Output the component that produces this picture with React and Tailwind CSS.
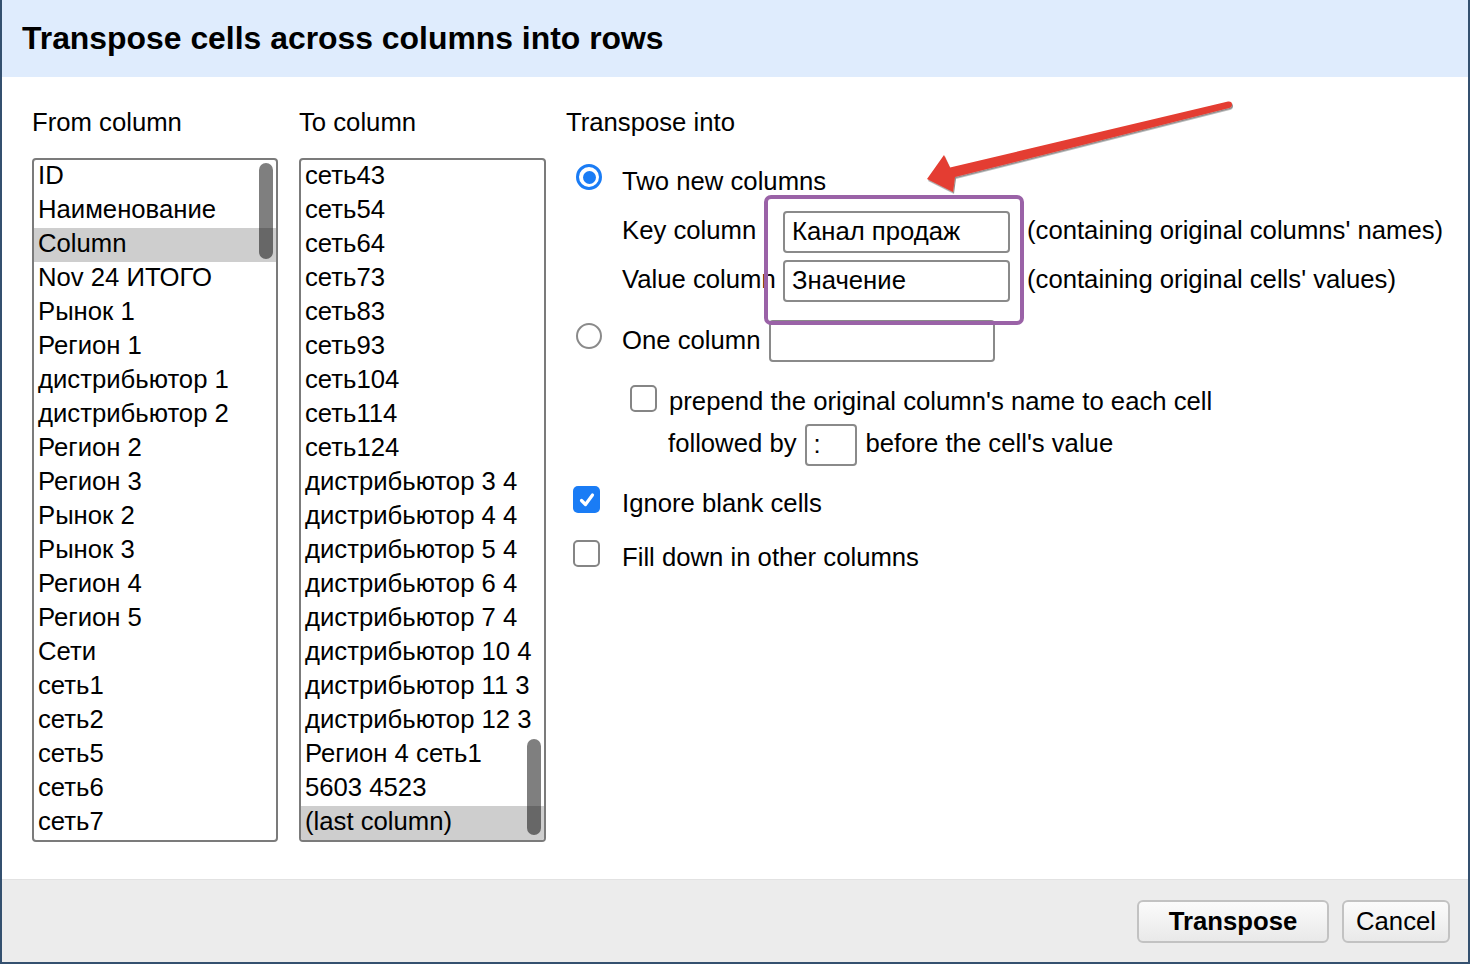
import React from "react";

const fromItems = [
  "ID", "Наименование", "Column", "Nov 24 ИТОГО", "Рынок 1", "Регион 1",
  "дистрибьютор 1", "дистрибьютор 2", "Регион 2", "Регион 3", "Рынок 2",
  "Рынок 3", "Регион 4", "Регион 5", "Сети", "сеть1", "сеть2", "сеть5",
  "сеть6", "сеть7",
];
const toItems = [
  "сеть43", "сеть54", "сеть64", "сеть73", "сеть83", "сеть93", "сеть104",
  "сеть114", "сеть124", "дистрибьютор 3 4", "дистрибьютор 4 4",
  "дистрибьютор 5 4", "дистрибьютор 6 4", "дистрибьютор 7 4",
  "дистрибьютор 10 4", "дистрибьютор 11 3", "дистрибьютор 12 3",
  "Регион 4 сеть1", "5603 4523", "(last column)",
];

function ListBox({ items, selected, thumbTop, extra }) {
  return (
    <div className={"relative h-[684px] border-2 border-[#7b7b7b] rounded-[4px] overflow-hidden bg-white " + extra}>
      {items.map((t, i) => (
        <div
          key={i}
          className={
            "h-[34px] pl-[4px] pb-[4px] whitespace-nowrap leading-[30px] " +
            (i === selected ? "bg-[#cecece]" : "")
          }
        >
          {t}
        </div>
      ))}
      <div
        className="absolute right-[3px] w-[14px] h-[96px] rounded-full bg-black/50"
        style={{ top: thumbTop }}
      />
    </div>
  );
}

function Radio({ checked, className = "" }) {
  return checked ? (
    <div className={"w-[26px] h-[26px] shrink-0 rounded-full border-[3px] border-[#1a7cf5] bg-white flex items-center justify-center " + className}>
      <div className="w-[13px] h-[13px] rounded-full bg-[#1a7cf5]" />
    </div>
  ) : (
    <div className={"w-[26px] h-[26px] shrink-0 rounded-full border-2 border-[#8a8a8a] bg-white " + className} />
  );
}

function Checkbox({ checked, className = "" }) {
  return checked ? (
    <div className={"w-[27px] h-[27px] shrink-0 rounded-[5px] bg-[#1a7cf5] flex items-center justify-center " + className}>
      <svg width="18" height="18" viewBox="0 0 18 18">
        <path d="M3.5 9.5 L7.5 13.5 L14.5 4" fill="none" stroke="white" strokeWidth="3.2" strokeLinecap="round" strokeLinejoin="round" />
      </svg>
    </div>
  ) : (
    <div className={"w-[27px] h-[27px] shrink-0 rounded-[5px] border-2 border-[#858585] bg-white " + className} />
  );
}

function TextInput({ value, w }) {
  return (
    <div className={"h-[42px] shrink-0 border-2 border-[#8a8a8a] rounded-[4px] bg-white pl-[7px] leading-[37px] whitespace-nowrap overflow-hidden " + w}>
      {value}
    </div>
  );
}

export default function App() {
  return (
    <div className="relative w-[1470px] h-[964px] bg-white border-x-2 border-b-2 border-[#34506f] flex flex-col font-['Liberation_Sans',Arial,sans-serif] text-black text-[25.7px] leading-[34px] overflow-hidden">
      <div className="h-[77px] shrink-0 bg-[#dfecfd] flex items-center pl-[20px]">
        <h1 className="text-[31.9px] font-bold leading-[40px] mt-[-2px]">
          Transpose cells across columns into rows
        </h1>
      </div>

      <div className="flex-1 flex pl-[30px] pt-[28px]">
        <div className="w-[246px] shrink-0">
          <div>From column</div>
          <ListBox items={fromItems} selected={2} thumbTop={3} extra="mt-[19px]" />
        </div>
        <div className="w-[247px] shrink-0 ml-[21px]">
          <div>To column</div>
          <ListBox items={toItems} selected={19} thumbTop={579} extra="mt-[19px]" />
        </div>
        <div className="ml-[20px] flex-1">
          <div>Transpose into</div>

          <div className="flex items-start mt-[25px]">
            <Radio checked className="ml-[10px]" />
            <div className="ml-[20px]">Two new columns</div>
          </div>

          <div className="pl-[56px] mt-[13px]">
            <div className="flex items-center">
              <div className="w-[161px] pb-[4px] whitespace-nowrap">Key column</div>
              <TextInput value="Канал продаж" w="w-[227px]" />
              <div className="ml-[17px] pb-[4px] whitespace-nowrap">(containing original columns' names)</div>
            </div>
            <div className="flex items-center mt-[7px]">
              <div className="w-[161px] pb-[4px] whitespace-nowrap">Value column</div>
              <TextInput value="Значение" w="w-[227px]" />
              <div className="ml-[17px] pb-[4px] whitespace-nowrap">(containing original cells' values)</div>
            </div>
          </div>

          <div className="flex items-start mt-[18px]">
            <Radio className="ml-[10px] mt-[3px]" />
            <div className="ml-[20px] mt-[3px] whitespace-nowrap">One column</div>
            <div className="ml-[8px]">
              <TextInput value="" w="w-[226px]" />
            </div>
          </div>

          <div className="flex items-start mt-[22px]">
            <Checkbox className="ml-[64px] mt-[1px]" />
            <div className="ml-[12px] whitespace-nowrap">prepend the original column's name to each cell</div>
          </div>
          <div className="flex items-center mt-[6px] pl-[102px]">
            <div className="whitespace-nowrap pb-[5px]">followed by</div>
            <div className="ml-[8px]">
              <TextInput value=":" w="w-[52px]" />
            </div>
            <div className="ml-[9px] pb-[5px] whitespace-nowrap">before the cell's value</div>
          </div>

          <div className="flex items-start mt-[20px]">
            <Checkbox checked className="ml-[7px]" />
            <div className="ml-[22px] whitespace-nowrap">Ignore blank cells</div>
          </div>
          <div className="flex items-start mt-[20px]">
            <Checkbox className="ml-[7px]" />
            <div className="ml-[22px] whitespace-nowrap">Fill down in other columns</div>
          </div>
        </div>
      </div>

      <div className="h-[83px] shrink-0 bg-[#ececec] border-t border-[#e2e2e2] flex items-center justify-end pr-[18px] gap-[13px]">
        <button className="w-[192px] h-[43px] rounded-[6px] border-2 border-[#c2c2c2] bg-linear-to-b from-[#fbfbfb] to-[#e9e9e9] font-bold leading-[38px]">
          Transpose
        </button>
        <button className="w-[108px] h-[43px] rounded-[6px] border-2 border-[#c2c2c2] bg-linear-to-b from-[#fbfbfb] to-[#e9e9e9] leading-[38px]">
          Cancel
        </button>
      </div>

      {/* purple highlight */}
      <div className="absolute left-[762px] top-[195px] w-[260px] h-[130px] border-4 border-[#9a62a7] rounded-[7px] pointer-events-none" />

      {/* red arrow */}
      <svg className="absolute left-[-2px] top-0 pointer-events-none" width="1470" height="964" viewBox="0 0 1470 964">
        <defs>
          <filter id="sh" x="-10%" y="-50%" width="120%" height="200%">
            <feDropShadow dx="1" dy="1.6" stdDeviation="0.7" floodColor="#000" floodOpacity="0.45" />
          </filter>
        </defs>
        <path
          d="M927 179 L944 155 L950 167.5 L1228 101.5 Q1232 101 1232 104.5 Q1232 107 1229 108 L955 177 L953 192 Z"
          fill="#e43d30"
          filter="url(#sh)"
        />
      </svg>
    </div>
  );
}
